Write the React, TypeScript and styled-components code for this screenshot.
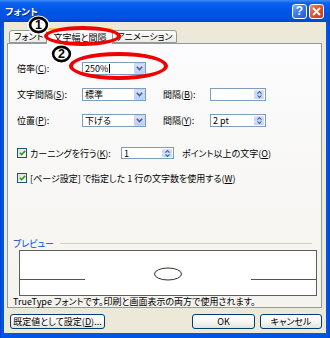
import React from "react";
import styled, { createGlobalStyle } from "styled-components";

const GlobalStyle = createGlobalStyle`
  html, body {
    margin: 0;
    padding: 0;
  }
  body {
    width: 330px;
    height: 338px;
    overflow: hidden;
    font-family: "Noto Sans CJK JP", "Liberation Sans", sans-serif;
    font-feature-settings: "palt";
    font-size: 9px;
    color: #000;
  }
  * {
    box-sizing: border-box;
  }
`;

const Window = styled.div`
  position: relative;
  width: 330px;
  height: 338px;
  display: flex;
  flex-direction: column;
`;

const TitleBar = styled.div`
  height: 22px;
  display: flex;
  align-items: center;
  padding: 0 6px 0 5px;
  background: linear-gradient(
    to bottom,
    #3b8cf6 0%,
    #0a60ef 14%,
    #0055e5 50%,
    #0052e0 82%,
    #0045cc 100%
  );
`;

const TitleText = styled.span`
  flex: 1;
  color: #fff;
  font-weight: bold;
  font-size: 9.5px;
  text-shadow: 1px 1px 0 #0a2a8a;
`;

const TitleButtons = styled.div`
  display: flex;
  gap: 2px;
`;

const TitleButton = styled.div<{ $close?: boolean }>`
  width: 15px;
  height: 15px;
  border: 1px solid #fff;
  border-radius: 3px;
  display: flex;
  align-items: center;
  justify-content: center;
  color: #fff;
  font-family: "Liberation Sans", sans-serif;
  font-weight: bold;
  font-size: 12px;
  background: ${(p) =>
    p.$close
      ? "linear-gradient(135deg, #f08a66 0%, #e3552e 45%, #c83a1a 100%)"
      : "linear-gradient(135deg, #7eb0ff 0%, #3b7af0 45%, #2356d8 100%)"};
`;

const Frame = styled.div`
  flex: 1;
  display: flex;
  padding: 0 4px 5px;
  background: linear-gradient(to right, #0040c8, #0055e5 2px, #0055e5 calc(100% - 2px), #0040c8);
`;

const Client = styled.div`
  flex: 1;
  display: flex;
  flex-direction: column;
  background: #ece9d8;
  padding: 6px 4px 4px 3px;
`;

const TabList = styled.div`
  height: 15px;
  display: flex;
  align-items: flex-end;
  padding-left: 2px;
`;

const Tab = styled.div<{ $active?: boolean }>`
  position: relative;
  display: flex;
  align-items: center;
  justify-content: center;
  height: ${(p) => (p.$active ? "16px" : "13px")};
  margin: ${(p) => (p.$active ? "0 -2px -1px" : "0")};
  padding: 0 ${(p) => (p.$active ? "6px" : "4px")};
  border: 1px solid #919b9c;
  border-bottom: ${(p) => (p.$active ? "none" : "1px solid #919b9c")};
  border-top: ${(p) => (p.$active ? "2px solid #ffc83c" : "1px solid #919b9c")};
  border-radius: 3px 3px 0 0;
  background: ${(p) =>
    p.$active ? "#fcfcfe" : "linear-gradient(to bottom, #ffffff, #ecebe6)"};
  z-index: ${(p) => (p.$active ? 1 : 0)};
  line-height: 1;
  white-space: nowrap;
`;

const Panel = styled.div`
  flex: 1;
  display: flex;
  flex-direction: column;
  border: 1px solid #919b9c;
  background: linear-gradient(to bottom, #fcfcfe, #f4f3ee);
  padding: 18px 4px 0 5px;
`;

const FieldStack = styled.div`
  display: flex;
  flex-direction: column;
  gap: 13px;
  margin-left: 4px;
`;

const FieldRow = styled.div`
  display: grid;
  grid-template-columns: 65px 64px 17px 47px 56px;
  height: 13px;
  align-items: center;
`;

const Label = styled.span<{ $col?: number }>`
  grid-column: ${(p) => p.$col ?? 1};
  white-space: nowrap;
  line-height: 1;
`;

const Combo = styled.div`
  grid-column: 2;
  height: 13px;
  display: flex;
  align-items: center;
  border: 1px solid #7f9db9;
  background: #fff;
  padding-left: 2px;
  line-height: 1;
`;

const Caret = styled.span`
  display: inline-block;
  width: 1px;
  height: 9px;
  background: #000;
  margin-left: 1px;
`;

const DropButton = styled.div`
  margin-left: auto;
  width: 11px;
  height: 11px;
  display: flex;
  align-items: center;
  justify-content: center;
  border-radius: 1px;
  background: linear-gradient(to bottom, #d5e2fc, #b8cdf8);
  border: 1px solid #c3d3fd;
`;

const Spin = styled.div<{ $w?: number }>`
  grid-column: 5;
  width: ${(p) => p.$w ?? 56}px;
  height: ${(p) => (p.$w ? 12 : 13)}px;
  display: flex;
  align-items: center;
  border: 1px solid #7f9db9;
  background: #fff;
  padding-left: 2px;
  line-height: 1;
  flex-shrink: 0;
`;

const SpinButtons = styled.div`
  margin-left: auto;
  width: 11px;
  height: 100%;
  display: flex;
  flex-direction: column;
  padding: 1px 1px 1px 0;
`;

const SpinHalf = styled.div`
  flex: 1;
  display: flex;
  align-items: center;
  justify-content: center;
  border-radius: 1px;
  background: linear-gradient(to bottom, #dae5fc, #bccff8);
`;

const CheckRow = styled.div<{ $top: number }>`
  display: flex;
  align-items: center;
  height: 12px;
  margin-top: ${(p) => p.$top}px;
  margin-left: 4px;
  line-height: 1;
  white-space: nowrap;
`;

const CheckBox = styled.div`
  width: 10px;
  height: 10px;
  border: 1px solid #1c5180;
  background: linear-gradient(135deg, #dcdcd7, #ffffff);
  display: flex;
  align-items: center;
  justify-content: center;
  margin-right: 3px;
  flex-shrink: 0;
`;

const CheckLabel = styled.span<{ $w?: number }>`
  width: ${(p) => (p.$w ? `${p.$w}px` : "auto")};
`;

const After = styled.span`
  margin-left: 8px;
`;

const Spacer = styled.div`
  flex: 1;
`;

const GroupHeader = styled.div`
  display: flex;
  align-items: center;
  gap: 6px;
  height: 10px;
  margin-right: 5px;
  line-height: 1;
`;

const GroupLabel = styled.span`
  color: #0046d5;
`;

const GroupLine = styled.div`
  flex: 1;
  height: 1px;
  background: #d0d0bf;
`;

const PreviewBox = styled.div`
  height: 46px;
  margin: 2px 0 0 6px;
  border: 1px solid #5e5e5e;
  background: #fff;
  display: flex;
`;

const InfoText = styled.div`
  height: 11px;
  line-height: 11px;
  white-space: nowrap;
`;

const Footer = styled.div`
  display: flex;
  align-items: center;
  margin-top: 6px;
  padding-left: 3px;
  gap: 5px;
`;

const Button = styled.div<{ $w: number; $push?: boolean }>`
  width: ${(p) => p.$w}px;
  height: 15px;
  display: flex;
  align-items: center;
  justify-content: center;
  border: 1px solid #003c74;
  border-radius: 3px;
  background: linear-gradient(to bottom, #ffffff 0%, #f4f4f0 60%, #e3e2da 100%);
  margin-left: ${(p) => (p.$push ? "auto" : "0")};
  line-height: 1;
  white-space: nowrap;
`;

const RedRing = styled.div<{ $x: number; $y: number; $w: number; $h: number }>`
  position: absolute;
  left: ${(p) => p.$x}px;
  top: ${(p) => p.$y}px;
  width: ${(p) => p.$w}px;
  height: ${(p) => p.$h}px;
  border: 4px solid #f00000;
  border-radius: 50%;
  z-index: 5;
  pointer-events: none;
`;

const Marker = styled.svg<{ $x: number; $y: number }>`
  position: absolute;
  left: ${(p) => p.$x}px;
  top: ${(p) => p.$y}px;
  z-index: 6;
  overflow: visible;
`;

const Chevron = () => (
  <svg width="7" height="5" viewBox="0 0 7 5">
    <path d="M0.8 0.8 L3.5 3.5 L6.2 0.8" fill="none" stroke="#4d6185" strokeWidth="1.6" />
  </svg>
);

const SpinArrow = ({ up }: { up?: boolean }) => (
  <svg width="5" height="3" viewBox="0 0 5 3">
    <path
      d={up ? "M0.5 2.6 L2.5 0.6 L4.5 2.6" : "M0.5 0.4 L2.5 2.4 L4.5 0.4"}
      fill="none"
      stroke="#4d6185"
      strokeWidth="1.1"
    />
  </svg>
);

const SpinControl = ({ value, w }: { value: string; w?: number }) => (
  <Spin $w={w}>
    {value}
    <SpinButtons>
      <SpinHalf>
        <SpinArrow up />
      </SpinHalf>
      <SpinHalf>
        <SpinArrow />
      </SpinHalf>
    </SpinButtons>
  </Spin>
);

const Check = () => (
  <CheckBox>
    <svg width="7" height="6" viewBox="0 0 7 6">
      <path d="M0.8 2.8 L2.6 4.6 L6.2 0.9" fill="none" stroke="#21a121" strokeWidth="1.6" />
    </svg>
  </CheckBox>
);

const NumberMark = ({ x, y, n }: { x: number; y: number; n: string }) => (
  <Marker $x={x} $y={y} width="21" height="18" viewBox="0 0 21 18">
    <ellipse cx="10.5" cy="9" rx="9.6" ry="8.2" fill="#fff" stroke="#fff" strokeWidth="2.5" />
    <ellipse cx="10.5" cy="9" rx="8.4" ry="7.1" fill="#fff" stroke="#000" strokeWidth="2.6" />
    <text
      x="10.5"
      y="13.4"
      textAnchor="middle"
      fontFamily="Liberation Sans, sans-serif"
      fontWeight="bold"
      fontSize="12.5"
      fill="#000"
    >
      {n}
    </text>
  </Marker>
);

export default function App() {
  return (
    <>
      <GlobalStyle />
      <Window>
        <TitleBar>
          <TitleText>フォント</TitleText>
          <TitleButtons>
            <TitleButton>?</TitleButton>
            <TitleButton $close>
              <svg width="9" height="9" viewBox="0 0 9 9">
                <path d="M1 1 L8 8 M8 1 L1 8" stroke="#fff" strokeWidth="1.8" />
              </svg>
            </TitleButton>
          </TitleButtons>
        </TitleBar>
        <Frame>
          <Client>
            <TabList>
              <Tab>フォント</Tab>
              <Tab $active>文字幅と間隔</Tab>
              <Tab>アニメーション</Tab>
            </TabList>
            <Panel>
              <FieldStack>
                <FieldRow>
                  <Label>
                    倍率(<u>C</u>):
                  </Label>
                  <Combo>
                    250%
                    <Caret />
                    <DropButton>
                      <Chevron />
                    </DropButton>
                  </Combo>
                </FieldRow>
                <FieldRow>
                  <Label>
                    文字間隔(<u>S</u>):
                  </Label>
                  <Combo>
                    標準
                    <DropButton>
                      <Chevron />
                    </DropButton>
                  </Combo>
                  <Label $col={4}>
                    間隔(<u>B</u>):
                  </Label>
                  <SpinControl value="" />
                </FieldRow>
                <FieldRow>
                  <Label>
                    位置(<u>P</u>):
                  </Label>
                  <Combo>
                    下げる
                    <DropButton>
                      <Chevron />
                    </DropButton>
                  </Combo>
                  <Label $col={4}>
                    間隔(<u>Y</u>):
                  </Label>
                  <SpinControl value="2 pt" />
                </FieldRow>
              </FieldStack>
              <CheckRow $top={20}>
                <Check />
                <CheckLabel $w={91}>
                  カーニングを行う(<u>K</u>):
                </CheckLabel>
                <SpinControl value="1" w={53} />
                <After>
                  ポイント以上の文字(<u>O</u>)
                </After>
              </CheckRow>
              <CheckRow $top={13}>
                <Check />
                <CheckLabel>
                  [ページ設定] で指定した 1 行の文字数を使用する(<u>W</u>)
                </CheckLabel>
              </CheckRow>
              <Spacer />
              <GroupHeader>
                <GroupLabel>プレビュー</GroupLabel>
                <GroupLine />
              </GroupHeader>
              <PreviewBox>
                <svg width="296" height="44" viewBox="0 0 296 44">
                  <line x1="0" y1="28.5" x2="65" y2="28.5" stroke="#555" strokeWidth="1" />
                  <line x1="231" y1="28.5" x2="296" y2="28.5" stroke="#555" strokeWidth="1" />
                  <ellipse cx="148" cy="23" rx="13.5" ry="6" fill="none" stroke="#3a2a2a" strokeWidth="1" />
                </svg>
              </PreviewBox>
              <InfoText>TrueType フォントです。印刷と画面表示の両方で使用されます。</InfoText>
            </Panel>
            <Footer>
              <Button $w={95}>
                既定値として設定(<u>D</u>)...
              </Button>
              <Button $w={63} $push>
                OK
              </Button>
              <Button $w={62}>キャンセル</Button>
            </Footer>
          </Client>
        </Frame>
        <RedRing $x={44} $y={26} $w={77} $h={20} />
        <RedRing $x={69} $y={52} $w={99} $h={28} />
        <NumberMark x={28} y={16} n="1" />
        <NumberMark x={51} y={45} n="2" />
      </Window>
    </>
  );
}
